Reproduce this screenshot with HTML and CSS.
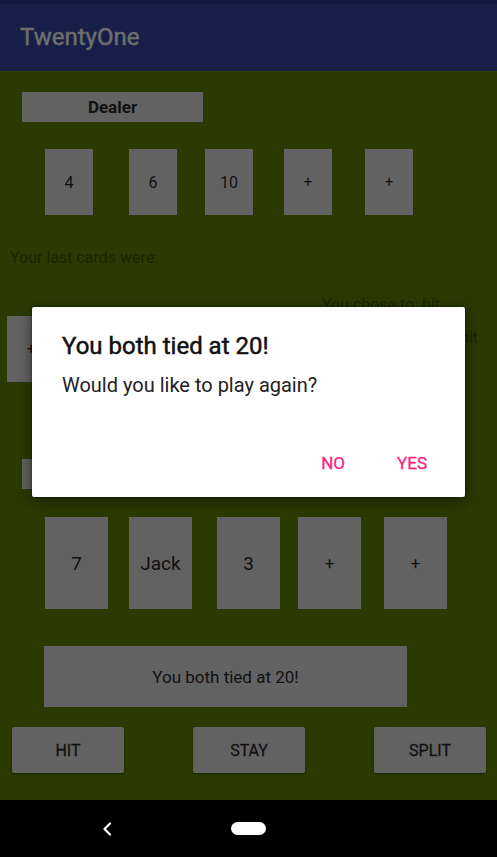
FILE: index.html
```html
<!DOCTYPE html>
<html lang="en">
<head>
<meta charset="utf-8">
<title>TwentyOne</title>
<link rel="stylesheet" href="styles.css">
</head>
<body>
<div class="phone">
  <div class="status"></div>
  <header class="appbar"><span class="title">TwentyOne</span></header>
  <main class="table">
    <div class="label">Dealer</div>
    <div class="hand dealer-hand">
      <div class="card">4</div>
      <div class="card">6</div>
      <div class="card">10</div>
      <div class="card plus">+</div>
      <div class="card plus">+</div>
    </div>
    <p class="last">Your last cards were:</p>
    <div class="mid">
      <div class="card plus mini">+</div>
      <div class="choices">
        <span class="choice">You chose to: hit</span>
        <span class="choice right">You chose to: hit</span>
      </div>
    </div>
    <div class="label player-label">Player</div>
    <div class="hand player-hand">
      <div class="card big">7</div>
      <div class="card big">Jack</div>
      <div class="card big">3</div>
      <div class="card big plus">+</div>
      <div class="card big plus">+</div>
    </div>
    <div class="result">You both tied at 20!</div>
    <div class="actions">
      <button class="btn">HIT</button>
      <button class="btn">STAY</button>
      <button class="btn">SPLIT</button>
    </div>
  </main>
  <nav class="navbar">
    <svg class="back" width="10" height="14" viewBox="0 0 10 14"><polyline points="8,1.5 2.5,7 8,12.5" fill="none" stroke="#fff" stroke-width="2.2" stroke-linecap="round" stroke-linejoin="round"/></svg>
    <span class="home"></span>
  </nav>
  <div class="dialog" role="dialog">
    <h2 class="dlg-title">You both tied at 20!</h2>
    <p class="dlg-msg">Would you like to play again?</p>
    <div class="dlg-actions">
      <span class="dlg-btn">NO</span>
      <span class="dlg-btn">YES</span>
    </div>
  </div>
</div>
</body>
</html>
```

FILE: styles.css
```css
* { box-sizing: border-box; }
html, body { margin: 0; padding: 0; }
body { font-family: Roboto, "Noto Sans", sans-serif; background: #000; }

.medium {
  font-weight: 400;
}

.phone {
  position: relative;
  width: 497px;
  height: 857px;
  display: flex;
  flex-direction: column;
  overflow: hidden;
}

.status { height: 4px; background: #131a42; }

.appbar {
  height: 67px;
  background: #171f48;
  display: flex;
  align-items: center;
  padding-left: 20px;
}
.title {
  font-size: 24px;
  font-weight: 400;
  -webkit-text-stroke: 0.5px #6e6e6e;
  color: #6e6e6e;
  margin-top: -2px;
}

.table {
  flex: 1;
  background: #2a3a00;
  display: flex;
  flex-direction: column;
}

.label {
  margin: 21px 0 0 22px;
  width: 181px;
  height: 30px;
  background: #626262;
  color: #111;
  font-weight: 700;
  font-size: 17px;
  display: flex;
  align-items: center;
  justify-content: center;
}

.hand { display: grid; align-items: start; }
.dealer-hand {
  margin: 27px 0 0 45px;
  grid-template-columns: 48px 36px 48px 28px 48px 31px 48px 33px 48px;
}
.dealer-hand .card:nth-child(1) { grid-column: 1; }
.dealer-hand .card:nth-child(2) { grid-column: 3; }
.dealer-hand .card:nth-child(3) { grid-column: 5; }
.dealer-hand .card:nth-child(4) { grid-column: 7; }
.dealer-hand .card:nth-child(5) { grid-column: 9; }

.card {
  height: 66px;
  background: #626262;
  color: #111;
  font-size: 16px;
  display: flex;
  align-items: center;
  justify-content: center;
  grid-row: 1;
}
.card.plus { font-size: 15px; }

.last {
  margin: 33px 0 0 10px;
  font-size: 16px;
  line-height: 19px;
  height: 19px;
  color: #1a2500;
}

.mid {
  margin-top: 28px;
  height: 87px;
  display: flex;
  align-items: flex-start;
}
.card.mini {
  width: 48px;
  margin: 21px 0 0 7px;
}
.choices {
  margin-left: auto;
  margin-right: 19px;
  width: 156px;
  display: flex;
  flex-direction: column;
  font-size: 16px;
  line-height: 19px;
  color: #1a2500;
}
.choice.right { text-align: right; margin-top: 14px; }

.player-label { margin-top: 77px; }

.player-hand {
  margin: 28px 0 0 45px;
  grid-template-columns: 63px 21px 63px 25px 63px 18px 63px 23px 63px;
}
.player-hand .card:nth-child(1) { grid-column: 1; }
.player-hand .card:nth-child(2) { grid-column: 3; }
.player-hand .card:nth-child(3) { grid-column: 5; }
.player-hand .card:nth-child(4) { grid-column: 7; }
.player-hand .card:nth-child(5) { grid-column: 9; }
.card.big { height: 92px; font-size: 19px; }
.card.big.plus { font-size: 17px; }

.result {
  margin: 37px 0 0 44px;
  width: 363px;
  height: 61px;
  background: #626262;
  color: #111;
  font-size: 17px;
  display: flex;
  align-items: center;
  justify-content: center;
}

.actions {
  margin: 20px 11px 0 12px;
  display: flex;
  justify-content: space-between;
}
.btn {
  width: 112px;
  height: 46px;
  border: none;
  border-radius: 2px;
  background: #626262;
  color: #111;
  font-family: Roboto, sans-serif;
  font-weight: 400;
  -webkit-text-stroke: 0.3px #111;
  font-size: 16px;
  box-shadow: 0 1px 2px rgba(0,0,0,0.45);
  padding: 0;
}

.navbar {
  height: 57px;
  background: #000;
  position: relative;
}
.back { position: absolute; left: 102px; top: 22px; }
.home {
  position: absolute;
  left: 231px;
  top: 22px;
  width: 35px;
  height: 13px;
  border-radius: 7px;
  background: #fff;
}

.dialog {
  position: absolute;
  left: 32px;
  top: 307px;
  width: 433px;
  height: 190px;
  background: #fff;
  border-radius: 2px;
  box-shadow: 0 4px 14px rgba(0,0,0,0.5), 0 0 2px rgba(0,0,0,0.6);
  padding: 25px 30px 0 30px;
  display: flex;
  flex-direction: column;
}
.dlg-title {
  margin: 0;
  font-size: 24px;
  line-height: 28px;
  font-weight: 400;
  -webkit-text-stroke: 0.5px #111;
  color: #111;
}
.dlg-msg {
  margin: 13px 0 0 0;
  font-size: 20px;
  line-height: 24px;
  color: #222;
}
.dlg-actions {
  margin-top: auto;
  margin-bottom: 24px;
  margin-right: 8px;
  display: flex;
  justify-content: flex-end;
  gap: 52px;
}
.dlg-btn {
  font-size: 17px;
  line-height: 20px;
  font-weight: 400;
  -webkit-text-stroke: 0.3px #ff2080;
  color: #ff2080;
}
```
